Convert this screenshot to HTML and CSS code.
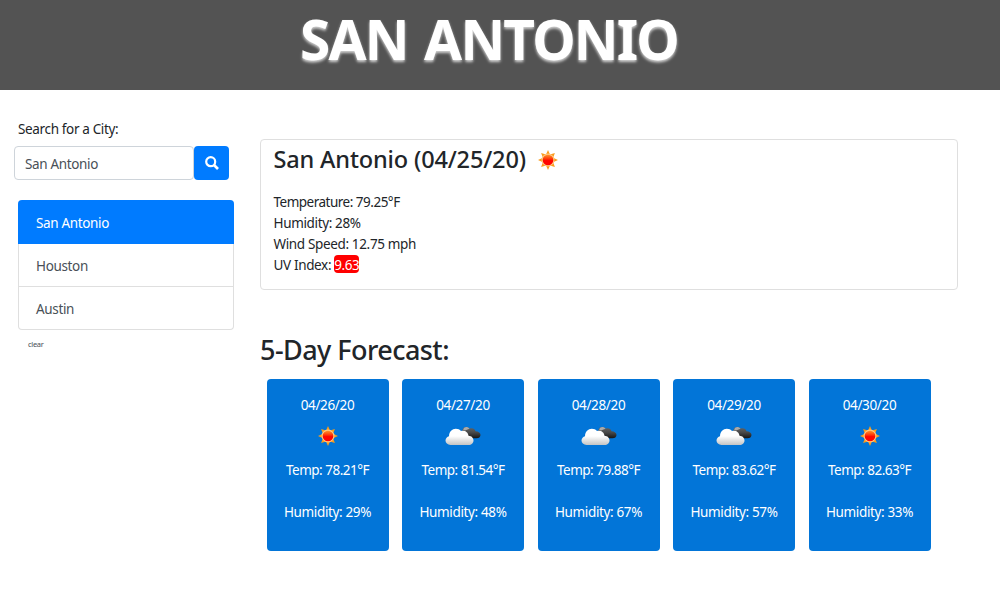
FILE: index.html
```html
<!DOCTYPE html>
<html lang="en">
<head>
<meta charset="utf-8">
<title>Weather Dashboard</title>
<link rel="stylesheet" href="styles.css">
</head>
<body>
<svg class="sprite" aria-hidden="true">
  <defs>
    <linearGradient id="core" x1="0" y1="0" x2="0" y2="1"><stop offset="0" stop-color="#ffa030"/><stop offset=".4" stop-color="#ff3a08"/><stop offset=".55" stop-color="#ff0500"/></linearGradient>
    <linearGradient id="white" x1="0" y1="0" x2="0" y2="1"><stop offset=".45" stop-color="#fff"/><stop offset="1" stop-color="#c4c4c4"/></linearGradient>
    <linearGradient id="dark" x1="0" y1="0" x2="0" y2="1"><stop offset="0" stop-color="#666"/><stop offset=".5" stop-color="#484848"/><stop offset="1" stop-color="#151515"/></linearGradient>
    <symbol id="sun" viewBox="0 0 20 20">
      <path fill="#fa9c1c" d="M10 0l2 4.6 4.9-1.7-1.8 4.9L20 10l-4.9 2.2 1.8 4.9-4.9-1.7L10 20l-2-4.6-4.9 1.7 1.8-4.9L0 10l4.9-2.2-1.8-4.9L8 4.6z"/>
      <circle cx="10" cy="10" r="5.900" fill="url(#core)" stroke="#ffc884" stroke-width="1.100"/>
    </symbol>
    <symbol id="cloud" viewBox="0 0 36 20">
      <path fill="url(#dark)" d="M17 5.500C17.500 2 19.500.8 21.500 1c1.500.1 2.500.8 3.200 1.700 2.500-1.200 5.200.1 5.800 2.500C33.500 5.200 35.500 7 35.500 9s-1.700 3.300-4 3.300H20z"/>
      <path fill="#aaa" d="M18 3.500C19 1.300 21 .6 22.500 1.200 23.500 1.600 24 2 24.500 2.800L20 4.500z"/>
      <path fill="url(#white)" d="M5.500 19C2.500 19 .5 17 .5 14.600S2.300 10.500 4 10.200C4.200 5.700 7.200 2.800 10.800 2.800c2.200 0 4 .8 5.200 2.300 3.600-1.200 7.100 1.100 7.500 4.600 3 .1 5 2.200 5 4.700S26.400 19 23.700 19z"/>
    </symbol>
  </defs>
</svg>
<header class="banner"><h1>SAN ANTONIO</h1></header>
<main class="layout">
  <aside class="sidebar">
    <label class="search-label" for="city">Search for a City:</label>
    <form class="search">
      <input id="city" class="search-input" type="text" value="San Antonio">
      <button class="search-button" type="button" aria-label="Search">
        <svg width="14" height="14" viewBox="0 0 14 14" fill="none" stroke="#fff"><circle cx="5.700" cy="5.700" r="4.500" stroke-width="2.200"/><path d="M9 9l4 4" stroke-width="2.600"/></svg>
      </button>
    </form>
    <ul class="cities">
      <li class="city active">San Antonio</li>
      <li class="city">Houston</li>
      <li class="city">Austin</li>
    </ul>
    <button class="clear" type="button">clear</button>
  </aside>
  <section class="content">
    <article class="current">
      <h2 class="current-title"><span>San Antonio (04/25/20)</span><svg class="sun"><use href="#sun"/></svg></h2>
      <p class="temp">Temperature: 79.25°F</p>
      <p>Humidity: 28%</p>
      <p>Wind Speed: 12.75 mph</p>
      <p>UV Index: <span class="uv">9.63</span></p>
    </article>
    <h2 class="forecast-title">5-Day Forecast:</h2>
    <div class="forecast">
      <div class="day"><p>04/26/20</p><div class="icon"><svg class="sun"><use href="#sun"/></svg></div><p class="temp">Temp: 78.21°F</p><p>Humidity: 29%</p></div>
      <div class="day"><p>04/27/20</p><div class="icon"><svg class="cloud"><use href="#cloud"/></svg></div><p class="temp">Temp: 81.54°F</p><p>Humidity: 48%</p></div>
      <div class="day"><p>04/28/20</p><div class="icon"><svg class="cloud"><use href="#cloud"/></svg></div><p class="temp">Temp: 79.88°F</p><p>Humidity: 67%</p></div>
      <div class="day"><p>04/29/20</p><div class="icon"><svg class="cloud"><use href="#cloud"/></svg></div><p class="temp">Temp: 83.62°F</p><p>Humidity: 57%</p></div>
      <div class="day"><p>04/30/20</p><div class="icon"><svg class="sun"><use href="#sun"/></svg></div><p class="temp">Temp: 82.63°F</p><p>Humidity: 33%</p></div>
    </div>
  </section>
</main>
</body>
</html>
```
FILE: styles.css
```css
* { box-sizing: border-box; }
body {
  margin: 0;
  background: #fff;
  color: #212529;
  font: 13.500px/21px "Noto Sans", "Open Sans", sans-serif;
  letter-spacing: -0.35px;
}
h1, h2, p, ul { margin: 0; padding: 0; font-weight: 500; }
p { font-weight: 400; }
.sprite { position: absolute; width: 0; height: 0; }
.banner { height: 90px; background: #535353; color: #fff; text-align: center; padding-right: 22px; }
.banner h1 {
  font-size: 55px;
  line-height: 78px;
  font-weight: 700;
  letter-spacing: -1.8px;
  word-spacing: 4px;
  text-shadow: 0 2px 3px rgba(255, 255, 255, .75);
}
.layout { display: flex; }
.sidebar { width: 260px; padding: 29px 25px 0 14px; flex: none; }
.search-label { display: block; padding-left: 4px; margin-bottom: 6px; }
.search { display: flex; height: 34px; width: 215px; margin: 0; }
.search-input {
  width: 180px;
  padding: 2px 10px 0;
  border: 1px solid #ced4da;
  border-radius: 4px;
  color: #495057;
  font: inherit;
  letter-spacing: inherit;
}
.search-button {
  display: flex;
  width: 35px;
  align-items: center;
  justify-content: center;
  padding: 0;
  border: 0;
  border-radius: 4px;
  background: #007bff;
}
.cities {
  width: 216px;
  margin: 20px 0 0 4px;
  list-style: none;
  border: 1px solid #dfdfdf;
  border-top: 0;
  border-radius: 4px;
  font-weight: 400;
}
.city { height: 43px; padding: 12px 17px 0; color: #495057; }
.city + .city { border-top: 1px solid #dfdfdf; }
.city.active { height: 44px; margin: 0 -1px; padding: 13px 18px 0; background: #007bff; color: #fff; border-radius: 4px 4px 0 0; }
.city.active + .city { height: 42px; border-top: 0; }
.clear {
  display: block;
  margin: 8px 0 0 14px;
  padding: 0;
  border: 0;
  background: none;
  color: #495057;
  font: 7.500px/12px "Noto Sans", "Open Sans", sans-serif;
  letter-spacing: -0.3px;
}
.content { width: 699px; padding-top: 49px; }
.current { height: 151px; width: 698px; padding: 5px 12.500px; border: 1px solid #dfdfdf; border-radius: 4px; }
.current-title {
  display: flex;
  align-items: center;
  gap: 12px;
  height: 30px;
  margin-bottom: 17px;
  font-size: 23.500px;
  line-height: 30px;
  letter-spacing: -0.15px;
}
.current-title span { margin-top: -2px; }
.temp { letter-spacing: -0.5px; }
.sun { width: 20px; height: 20px; }
.cloud { width: 36px; height: 20px; }
.uv { display: inline-block; height: 18px; line-height: 20px; background: red; color: #fff; border-radius: 4px; vertical-align: top; letter-spacing: -0.5px; }
.forecast-title { margin-top: 42px; height: 36px; font-size: 27px; line-height: 35px; letter-spacing: -0.55px; }
.forecast { display: flex; gap: 13.500px; padding: 11px 0 0 6.500px; }
.day { width: 122px; height: 172px; padding-top: 16px; background: #0275d8; color: #fff; border-radius: 4px; text-align: center; flex: none; }
.icon { display: flex; height: 44px; align-items: center; justify-content: center; padding-bottom: 4px; }
.day p + p { margin-top: 21px; }
```
